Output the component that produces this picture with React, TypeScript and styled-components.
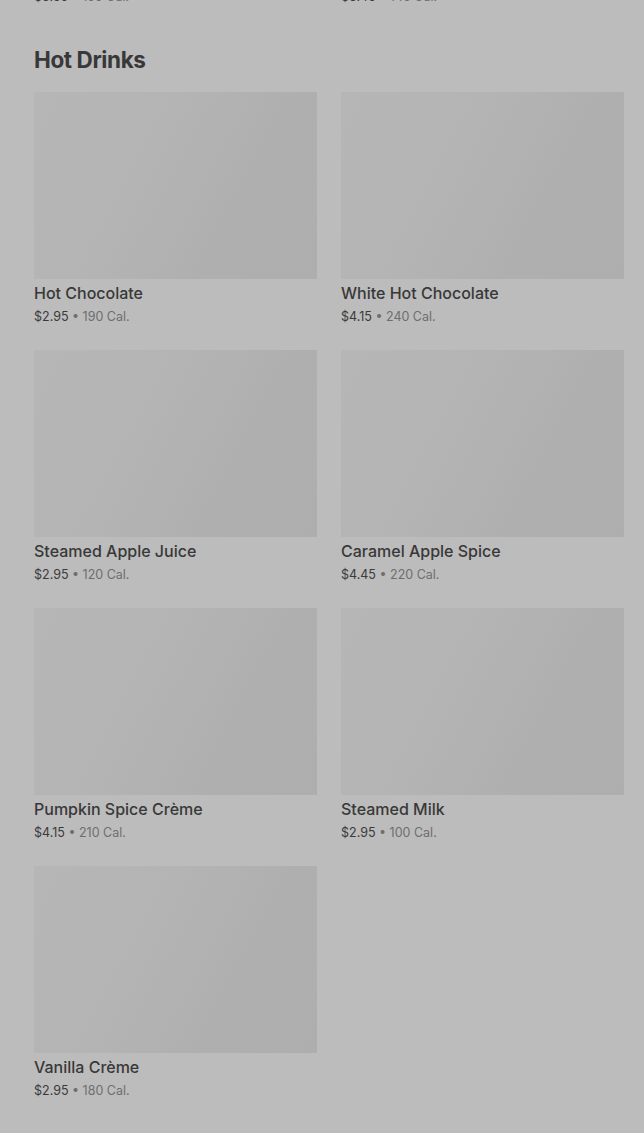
import React from 'react'
import styled, { createGlobalStyle } from 'styled-components'

const GlobalStyle = createGlobalStyle`
  html, body {
    margin: 0;
    padding: 0;
    background: #bcbcbc;
    overflow: hidden;
  }
  body {
    font-family: Inter, 'Noto Sans', 'Liberation Sans', sans-serif;
    -webkit-font-smoothing: antialiased;
  }
`

type Item = { name: string; price: string; cal: string }

const drinks: Item[] = [
  { name: 'Hot Chocolate', price: '$2.95', cal: '190 Cal.' },
  { name: 'White Hot Chocolate', price: '$4.15', cal: '240 Cal.' },
  { name: 'Steamed Apple Juice', price: '$2.95', cal: '120 Cal.' },
  { name: 'Caramel Apple Spice', price: '$4.45', cal: '220 Cal.' },
  { name: 'Pumpkin Spice Crème', price: '$4.15', cal: '210 Cal.' },
  { name: 'Steamed Milk', price: '$2.95', cal: '100 Cal.' },
  { name: 'Vanilla Crème', price: '$2.95', cal: '180 Cal.' },
]

// scrolled view: the previous section's last price line peeks in at the top
const Page = styled.div`
  padding: 0 20px 0 34px;
  margin-top: -17px;
  height: 1150px;
  color: #3a3a3a;
`

const TailRow = styled.div`
  display: grid;
  grid-template-columns: 1fr 1fr;
  column-gap: 24px;
`

const Section = styled.section`
  margin-top: 41px;
`

const Heading = styled.h2`
  margin: 0;
  font-size: 22.5px;
  line-height: 28px;
  font-weight: 700;
  letter-spacing: -0.4px;
  color: #383838;
`

const Grid = styled.div`
  margin-top: 18px;
  display: grid;
  grid-template-columns: 1fr 1fr;
  column-gap: 24px;
  row-gap: 25px;
`

const Card = styled.div`
  display: flex;
  flex-direction: column;
`

const Thumb = styled.div`
  height: 187px;
  background: linear-gradient(
    118deg,
    #b6b6b6 0%,
    #b4b4b4 38%,
    #b2b2b2 52%,
    #afafaf 70%,
    #aeaeae 100%
  );
`

const Name = styled.div`
  margin-top: 4px;
  font-size: 16px;
  line-height: 20px;
  font-weight: 500;
  color: #383838;
`

const Price = styled.div`
  margin-top: 5px;
  font-size: 12.5px;
  line-height: 17px;
  color: #3a3a3a;
  white-space: nowrap;
`

const Cal = styled.span`
  color: #6e6e6e;
`

const PriceLine: React.FC<{ item: Item }> = ({ item }) => (
  <Price>
    {item.price} <Cal>• {item.cal}</Cal>
  </Price>
)

const App: React.FC = () => {
  return (
    <>
      <GlobalStyle />
      <Page>
        <TailRow>
          <PriceLine item={{ name: '', price: '$3.65', cal: '150 Cal.' }} />
          <PriceLine item={{ name: '', price: '$3.45', cal: '140 Cal.' }} />
        </TailRow>
        <Section>
          <Heading>Hot Drinks</Heading>
          <Grid>
            {drinks.map((d) => (
              <Card key={d.name}>
                <Thumb />
                <Name>{d.name}</Name>
                <PriceLine item={d} />
              </Card>
            ))}
          </Grid>
        </Section>
      </Page>
    </>
  )
}

export default App
